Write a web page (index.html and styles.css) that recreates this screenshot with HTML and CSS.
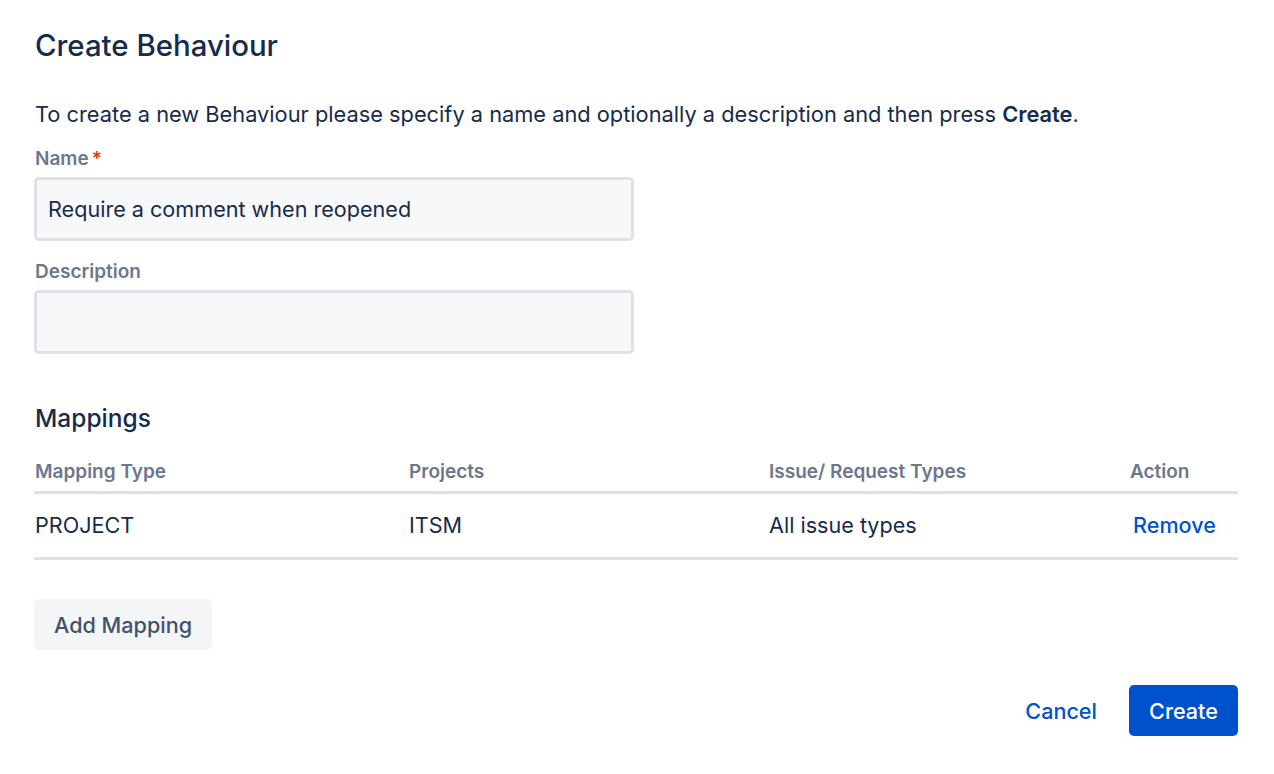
FILE: index.html
```html
<!DOCTYPE html>
<html lang="en">
<head>
    <meta charset="UTF-8">
    <title>Create Behaviour</title>
    <link rel="stylesheet" href="styles.css">
</head>
<body>
    <div class="page">
        <h2 class="title">Create Behaviour</h2>
        <p class="intro">To create a new Behaviour please specify a name and optionally a description and then press <b>Create</b>.</p>

        <form class="behaviour-form">
            <label class="field-label" for="name">Name<span class="required">*</span></label>
            <input class="field" type="text" id="name" value="Require a comment when reopened">

            <label class="field-label" for="description">Description</label>
            <input class="field" type="text" id="description" value="">
        </form>

        <h3 class="section-title">Mappings</h3>
        <table class="mappings">
            <thead>
                <tr>
                    <th class="col-type">Mapping Type</th>
                    <th class="col-projects">Projects</th>
                    <th class="col-issues">Issue/ Request Types</th>
                    <th class="col-action">Action</th>
                </tr>
            </thead>
            <tbody>
                <tr>
                    <td>PROJECT</td>
                    <td>ITSM</td>
                    <td>All issue types</td>
                    <td class="cell-action"><a class="link" href="#">Remove</a></td>
                </tr>
            </tbody>
        </table>

        <button class="btn btn-subtle" type="button">Add Mapping</button>

        <div class="actions">
            <a class="link cancel" href="#">Cancel</a>
            <button class="btn btn-primary" type="button">Create</button>
        </div>
    </div>
</body>
</html>
```

FILE: styles.css
```css
body {
    font-family: Inter, "Noto Sans", sans-serif;
    margin: 0;
    background-color: #fff;
    color: #172b4d;
}
.page {
    padding: 26px 36px 0 34px;
}
.title {
    font-size: 29.4px;
    font-weight: 500;
    margin: 0 0 0 1px;
    line-height: 40px;
}
.intro {
    font-size: 21.8px;
    line-height: 28px;
    margin: 34px 0 0 1px;
}
.intro b {
    font-weight: 600;
}
.behaviour-form {
    width: 600px;
}
.field-label {
    display: block;
    font-size: 19px;
    font-weight: 600;
    color: #6b778c;
    line-height: 24px;
    margin: 19px 0 6px 1px;
}
.required {
    color: #de350b;
    margin-left: 3px;
}
.field {
    display: block;
    box-sizing: border-box;
    width: 600px;
    height: 64px;
    padding: 0 11px;
    font-family: inherit;
    font-size: 21.6px;
    color: #172b4d;
    background: #f7f8f9;
    border: 3px solid #dfe1e6;
    border-radius: 5px;
    margin: 0 0 18px 0;
}
.section-title {
    font-size: 24.5px;
    font-weight: 500;
    margin: 48px 0 0 1px;
    line-height: 32px;
}
.mappings {
    width: 100%;
    table-layout: fixed;
    border-collapse: collapse;
    margin-top: 26px;
}
.mappings th {
    text-align: left;
    font-size: 19px;
    font-weight: 600;
    color: #6b778c;
    line-height: 24px;
    padding: 0 0 7px 1px;
    border-bottom: 3px solid #dfe1e6;
}
.mappings td {
    font-size: 21.6px;
    line-height: 28px;
    padding: 17px 0 18px 1px;
    border-bottom: 3px solid #dfe1e6;
}
.mappings .cell-action {
    padding-left: 4px;
}
.col-type { width: 373px; }
.col-projects { width: 359px; }
.col-issues { width: 360px; }
.link {
    color: #0052cc;
    text-decoration: none;
    font-weight: 500;
}
.btn {
    font-family: inherit;
    font-size: 21.6px;
    font-weight: 500;
    border: none;
    border-radius: 5px;
    height: 51px;
    padding: 0 20px;
    cursor: pointer;
}
.btn-subtle {
    background: #f4f5f7;
    color: #42526e;
    margin-top: 39px;
}
.btn-primary {
    background: #0052cc;
    color: #fff;
    width: 109px;
    padding: 0;
}
.actions {
    display: flex;
    justify-content: flex-end;
    align-items: center;
    gap: 32px;
    margin-top: 35px;
}
.cancel {
    font-size: 21.6px;
}
```
